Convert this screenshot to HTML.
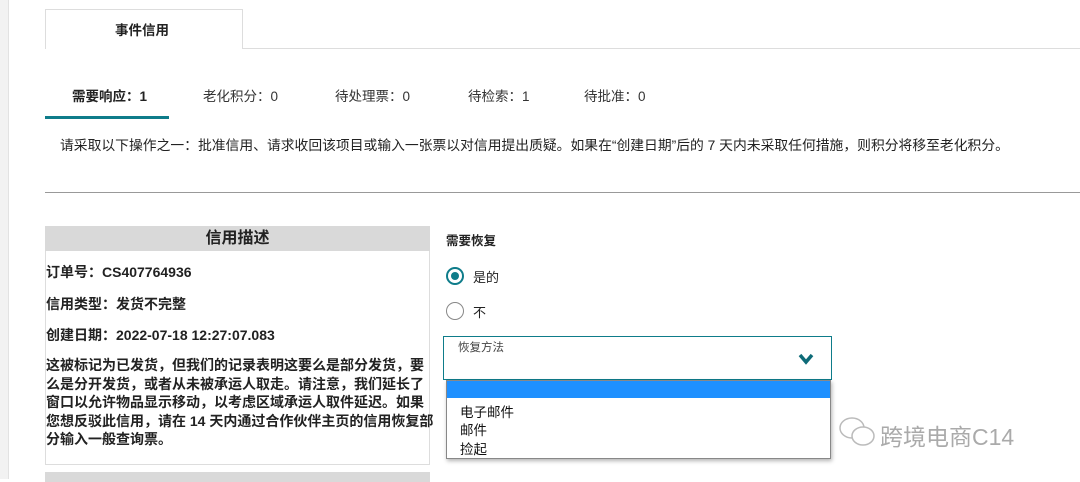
<!DOCTYPE html><html><head><meta charset="utf-8"><style>
*{margin:0;padding:0;box-sizing:border-box}
body{width:1080px;height:479px;overflow:hidden;background:#fff;font-family:"Liberation Sans","Noto Sans CJK SC",sans-serif;color:#222;position:relative}
.a{position:absolute;white-space:nowrap}
</style></head><body>
<div class="a" style="left:0;top:0;width:9px;height:479px;background:#f2f2f2;border-right:1px solid #e2e2e2"></div>
<div class="a" style="left:45px;top:9px;width:198px;height:40px;border:1px solid #ddd;border-bottom:none;background:#fff"></div>
<div class="a" style="left:242px;top:48px;width:838px;height:1px;background:#ddd"></div>
<div class="a" style="left:115px;top:19px;font-size:13.5px;font-weight:bold">事件信用</div>
<div class="a" style="left:72px;top:85px;font-size:13.5px;font-weight:bold">需要响应：1</div>
<div class="a" style="left:203px;top:85px;font-size:13.5px;color:#333">老化积分：0</div>
<div class="a" style="left:335px;top:85px;font-size:13.5px;color:#333">待处理票：0</div>
<div class="a" style="left:468px;top:85px;font-size:13.5px;color:#333">待检索：1</div>
<div class="a" style="left:584px;top:85px;font-size:13.5px;color:#333">待批准：0</div>
<div class="a" style="left:45px;top:116px;width:124px;height:3px;background:#0e7c8a"></div>
<div class="a" style="left:60px;top:134px;font-size:13.8px;color:#222">请采取以下操作之一：批准信用、请求收回该项目或输入一张票以对信用提出质疑。如果在“创建日期”后的 7 天内未采取任何措施，则积分将移至老化积分。</div>
<div class="a" style="left:45px;top:192px;width:1035px;height:1px;background:#999"></div>
<div class="a" style="left:45px;top:226px;width:385px;height:239px;border:1px solid #ddd"></div>
<div class="a" style="left:45px;top:226px;width:385px;height:25px;background:#d9d9d9;text-align:center;font-size:16px;font-weight:bold;line-height:25px">信用描述</div>
<div class="a" style="left:45px;top:472px;width:385px;height:10px;background:#d9d9d9"></div>
<div class="a" style="left:46px;top:262px;font-size:14px;font-weight:bold">订单号：CS407764936</div>
<div class="a" style="left:46px;top:294px;font-size:14px;font-weight:bold">信用类型：发货不完整</div>
<div class="a" style="left:46px;top:325px;font-size:14px;font-weight:bold">创建日期：2022-07-18 12:27:07.083</div>
<div class="a" style="left:46px;top:356px;font-size:14px;font-weight:bold;line-height:18.6px">这被标记为已发货，但我们的记录表明这要么是部分发货，要<br>么是分开发货，或者从未被承运人取走。请注意，我们延长了<br>窗口以允许物品显示移动，以考虑区域承运人取件延迟。如果<br>您想反驳此信用，请在 14 天内通过合作伙伴主页的信用恢复部<br>分输入一般查询票。</div>
<div class="a" style="left:446px;top:230px;font-size:12.5px;font-weight:bold">需要恢复</div>
<div class="a" style="left:446px;top:267px;width:18px;height:18px;border:2px solid #0e7c8a;border-radius:50%"></div>
<div class="a" style="left:451px;top:272px;width:8px;height:8px;background:#0e7c8a;border-radius:50%"></div>
<div class="a" style="left:473px;top:267px;font-size:13px">是的</div>
<div class="a" style="left:446px;top:302px;width:18px;height:18px;border:1.5px solid #888;border-radius:50%"></div>
<div class="a" style="left:473px;top:302px;font-size:13px">不</div>
<div class="a" style="left:443px;top:336px;width:389px;height:44px;border:1px solid #0e7c8a"></div>
<div class="a" style="left:458px;top:339px;font-size:11.5px;color:#444">恢复方法</div>
<svg class="a" style="left:797px;top:352px" width="18" height="14"><path d="M3 3 L9 10 L15 3" fill="none" stroke="#0e6b78" stroke-width="3.5"/></svg>
<div class="a" style="left:446px;top:380px;width:385px;height:79px;background:#fff;border:1px solid #888;box-shadow:1px 2px 4px rgba(0,0,0,.3)"></div>
<div class="a" style="left:447px;top:381px;width:383px;height:17px;background:#1e90ff"></div>
<div class="a" style="left:460px;top:401px;font-size:13.5px;color:#111">电子邮件</div>
<div class="a" style="left:460px;top:419px;font-size:13.5px;color:#111">邮件</div>
<div class="a" style="left:460px;top:438px;font-size:13.5px;color:#111">捡起</div>
<svg class="a" style="left:838px;top:414px" width="40" height="36"><ellipse cx="14" cy="14" rx="12" ry="10" fill="none" stroke="#bbb" stroke-width="1.5"/><ellipse cx="25" cy="22" rx="11" ry="9" fill="#fff" stroke="#bbb" stroke-width="1.5"/></svg>
<div class="a" style="left:880px;top:418px;font-size:23px;color:#aaa">跨境电商C14</div>
</body></html>
